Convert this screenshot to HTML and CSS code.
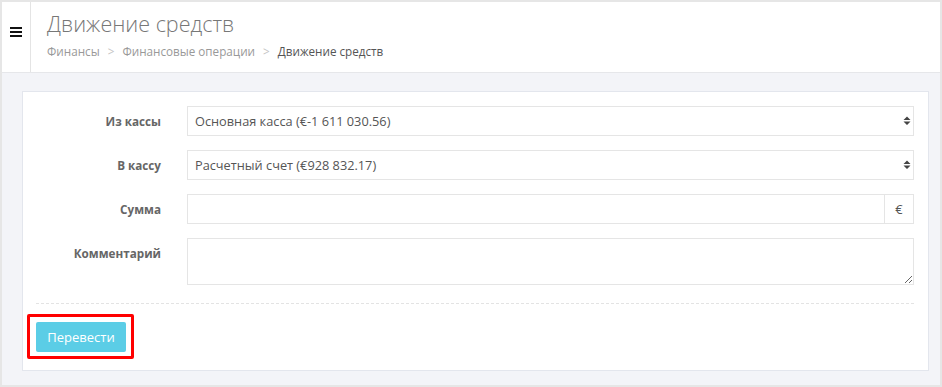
FILE: index.html
```html
<!DOCTYPE html>
<html lang="ru">
<head>
    <meta charset="UTF-8">
    <title>Движение средств</title>
    <link rel="stylesheet" href="styles.css">
</head>
<body>
    <div class="frame">
        <header class="topbar">
            <div class="toggle">
                <span class="burger"><i></i><i></i><i></i></span>
            </div>
            <div class="heading">
                <h1>Движение средств</h1>
                <div class="breadcrumb">
                    <a href="#">Финансы</a>
                    <span class="sep">&gt;</span>
                    <a href="#">Финансовые операции</a>
                    <span class="sep">&gt;</span>
                    <span class="current">Движение средств</span>
                </div>
            </div>
        </header>
        <main class="content">
            <form class="card">
                <div class="form-row">
                    <label>Из кассы</label>
                    <div class="select-wrap">
                        <select name="from">
                            <option>Основная касса (€-1 611 030.56)</option>
                        </select>
                        <svg class="arrows" width="8" height="10" viewBox="0 0 8 10"><path d="M4 0.5 L7.5 4 L0.5 4 Z M0.5 5.5 L7.5 5.5 L4 9 Z" fill="#444"/></svg>
                    </div>
                </div>
                <div class="form-row">
                    <label>В кассу</label>
                    <div class="select-wrap">
                        <select name="to">
                            <option>Расчетный счет (€928 832.17)</option>
                        </select>
                        <svg class="arrows" width="8" height="10" viewBox="0 0 8 10"><path d="M4 0.5 L7.5 4 L0.5 4 Z M0.5 5.5 L7.5 5.5 L4 9 Z" fill="#444"/></svg>
                    </div>
                </div>
                <div class="form-row">
                    <label>Сумма</label>
                    <div class="input-group">
                        <input type="text" name="amount">
                        <span class="addon">€</span>
                    </div>
                </div>
                <div class="form-row form-row-last">
                    <label>Комментарий</label>
                    <textarea name="comment"></textarea>
                </div>
                <div class="form-actions">
                    <span class="highlight">
                        <button type="submit">Перевести</button>
                    </span>
                </div>
            </form>
        </main>
    </div>
</body>
</html>
```

FILE: styles.css
```css
body {
    margin: 0;
    padding: 2px;
    background-color: #e6e6e6;
    font-family: 'Open Sans', 'Noto Sans', sans-serif;
}
.frame {
    height: 383px;
    display: flex;
    flex-direction: column;
}
.topbar {
    display: flex;
    height: 70px;
    background: white;
    border-bottom: 1px solid #e6e7ea;
}
.toggle {
    width: 29px;
    border-right: 1px solid #e4e4e4;
    display: flex;
    justify-content: center;
    padding-top: 25px;
    box-sizing: border-box;
}
.burger {
    display: flex;
    flex-direction: column;
    gap: 2px;
    width: 12px;
    height: 10px;
}
.burger i {
    display: block;
    height: 2px;
    background: #111;
}
.heading {
    padding-left: 16px;
}
h1 {
    margin: 8px 0 0 0;
    font-size: 21.5px;
    font-weight: 300;
    color: #777;
    line-height: 28px;
}
.breadcrumb {
    margin-top: 5px;
    font-size: 11.7px;
    color: #999;
    line-height: 16px;
}
.breadcrumb a {
    color: #999;
    text-decoration: none;
}
.breadcrumb .sep {
    color: #c4c4c4;
    margin: 0 5px;
}
.breadcrumb .current {
    color: #555;
}
.content {
    flex: 1;
    background-color: #f3f4f8;
    padding: 18px 11px 14px 20px;
}
.card {
    background: white;
    border: 1px solid #e3e6ed;
    padding: 14px 14px 11px 13px;
}
.form-row {
    display: grid;
    grid-template-columns: 125px 1fr;
    column-gap: 26px;
    margin-bottom: 14px;
}
.form-row label {
    text-align: right;
    font-size: 11.7px;
    font-weight: 700;
    color: #666;
    line-height: 18px;
    padding-top: 6px;
}
.select-wrap {
    position: relative;
}
select,
input[type="text"],
textarea {
    display: block;
    width: 100%;
    box-sizing: border-box;
    height: 30px;
    border: 1px solid #e5e5e5;
    border-radius: 0;
    background: white;
    font-family: 'Open Sans', 'Noto Sans', sans-serif;
    font-size: 12.75px;
    color: #555;
    padding: 0 7px;
    outline: none;
}
select {
    appearance: none;
    -webkit-appearance: none;
}
.arrows {
    position: absolute;
    right: 3px;
    top: 10px;
    pointer-events: none;
}
.input-group {
    display: flex;
}
.input-group input {
    flex: 1;
    border-right: none;
}
.addon {
    width: 30px;
    height: 30px;
    box-sizing: border-box;
    border: 1px solid #e5e5e5;
    display: flex;
    align-items: center;
    justify-content: center;
    font-size: 13px;
    color: #555;
}
.form-row textarea {
    height: 47px;
    padding: 6px 7px;
}
.form-row-last {
    margin-bottom: 18px;
}
.form-actions {
    border-top: 1px dashed #e3e3e3;
    padding-top: 10px;
}
.highlight {
    display: inline-block;
    border: 3px solid #f00;
    border-radius: 2px;
    padding: 5px 5px 4px 6px;
    margin-left: -9px;
}
button {
    display: block;
    width: 90px;
    height: 30px;
    background-color: #5bcde6;
    border: none;
    border-radius: 2px;
    color: white;
    font-family: 'Open Sans', 'Noto Sans', sans-serif;
    font-size: 13px;
    cursor: pointer;
}
```
